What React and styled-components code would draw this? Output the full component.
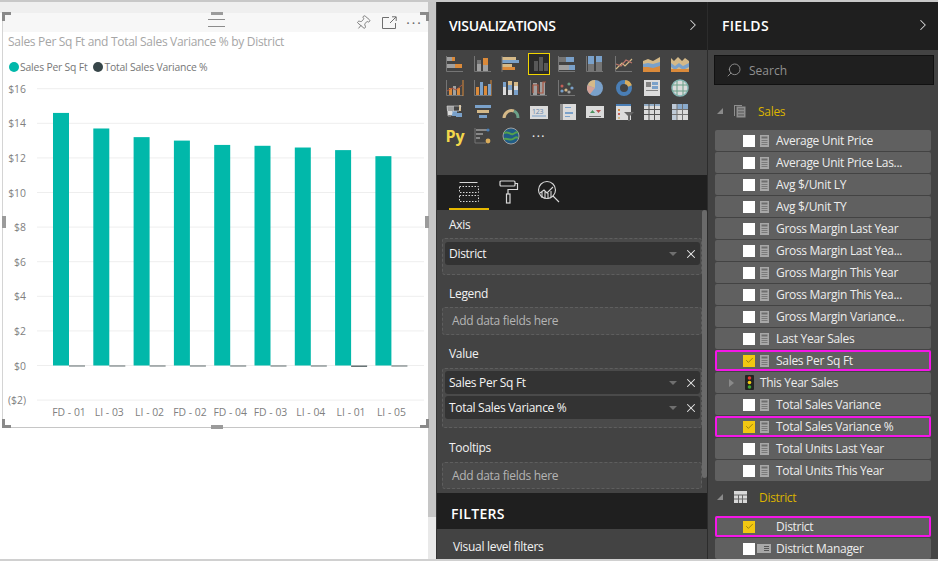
import React from 'react';
import styled, { createGlobalStyle } from 'styled-components';
import { ChevronRight, X, Search, Pin, Check } from 'lucide-react';

const GlobalStyle = createGlobalStyle`
  html, body { margin: 0; padding: 0; background: #fff; }
  body { font-family: "Open Sans", "Liberation Sans", sans-serif; overflow: hidden; }
`;

const Page = styled.div`
  width: 938px;
  height: 561px;
  display: grid;
  grid-template-columns: 428px 9px 271px 230px;
  box-sizing: border-box;
  border-top: 2px solid #c8c8c8;
  border-bottom: 2px solid #d0d0d0;
  overflow: hidden;
`;

/* report canvas */
const Canvas = styled.div`
  background: #fff;
  display: flex;
  flex-direction: column;
  padding-left: 2px;
`;
const CanvasBand = styled.div`
  height: 11px;
  flex: none;
  margin-left: -2px;
  background: #efefef;
`;
const Visual = styled.div`
  position: relative;
  height: 415px;
  border-bottom: 1px solid #c6c6c6;
  border-left: 1px solid #d4d4d4;
  box-sizing: border-box;
`;
const VisualHeader = styled.div`
  height: 19px;
  background: #f7f7f7;
  display: flex;
  align-items: center;
  justify-content: flex-end;
  gap: 9px;
  padding-right: 7px;
  color: #6f6f6f;
`;
const PinIcon = styled(Pin)`
  transform: rotate(40deg);
  margin-right: 2px;
`;
const MoreDots = styled.span`
  font-size: 8px;
  letter-spacing: 2.5px;
  margin-right: -2px;
  color: #6f6f6f;
`;
const Grip = styled.span`
  position: absolute;
  top: 6px;
  left: 205px;
  width: 17px;
  height: 6px;
  border-top: 1px solid #8c8c8c;
  border-bottom: 1px solid #8c8c8c;
`;
const Corner = styled.span`
  position: absolute;
  width: 9px;
  height: 9px;
  ${p => (p.$top ? 'top: -1px;' : 'bottom: -1px;')}
  ${p => (p.$left ? 'left: -1px;' : 'right: -1px;')}
  border-style: solid;
  border-color: #8a8a8a;
  border-width: ${p => (p.$top ? '3px' : '0')} ${p => (p.$left ? '0' : '3px')} ${p =>
  p.$top ? '0' : '3px'} ${p => (p.$left ? '3px' : '0')};
  box-sizing: border-box;
`;
const SideHandle = styled.span`
  position: absolute;
  background: #9b9b9b;
  ${p =>
    p.$side === 'left' && 'left: -1px; top: 203px; width: 4px; height: 12px;'}
  ${p =>
    p.$side === 'right' && 'right: -1px; top: 203px; width: 4px; height: 12px;'}
  ${p =>
    p.$side === 'top' && 'top: -1px; left: 208px; width: 12px; height: 3px;'}
  ${p =>
    p.$side === 'bottom' && 'bottom: -2px; left: 208px; width: 12px; height: 4px;'}
`;
const VisualTitle = styled.div`
  font-size: 12px;
  letter-spacing: -0.3px;
  line-height: 16px;
  color: #a6a6a6;
  margin: 2px 0 0 5px;
  white-space: nowrap;
`;
const Legend = styled.div`
  display: flex;
  align-items: center;
  margin: 10px 0 0 6px;
  font-size: 10.4px;
  letter-spacing: -0.2px;
  line-height: 14px;
  color: #777;
`;
const LegendItem = styled.span`
  display: flex;
  align-items: center;
  margin-right: 6px;
  &::before {
    content: '';
    width: 10px;
    height: 10px;
    border-radius: 50%;
    margin-right: 1px;
    background: ${p => p.$color};
  }
`;
const ChartSvg = styled.svg`
  display: block;
  font-family: "Open Sans", sans-serif;
  font-size: 10.4px;
  fill: #808080;
`;

const Gutter = styled.div`
  background: linear-gradient(#c6c6c6 0 515px, #e9e9e9 515px);
  border-right: 1px solid #333;
`;

/* dark panes */
const Pane = styled.div`
  display: flex;
  flex-direction: column;
  min-height: 0;
  background: #434343;
  color: #fff;
  border-right: ${p => (p.$bordered ? '1px solid #2c2c2c' : '0')};
  box-sizing: border-box;
  position: relative;
  letter-spacing: -0.3px;
`;
const PaneHeader = styled.div`
  height: ${p => p.$h || 48}px;
  flex: none;
  background: #1f1f1f;
  display: flex;
  align-items: center;
  justify-content: space-between;
  padding: ${p => p.$pt || 0}px ${p => p.$pr || 5}px ${p => p.$pb || 0}px ${p => p.$pl || 12}px;
  box-sizing: border-box;
  font-size: 14px;
  font-weight: 600;
  letter-spacing: ${p => p.$ls || 0}px;
  color: #fff;
  svg { color: #d9d9d9; }
`;
const VizGrid = styled.div`
  height: 125px;
  flex: none;
  box-sizing: border-box;
  padding: 2px 0 0 5px;
  display: grid;
  grid-template-columns: repeat(9, 28.1px);
  grid-auto-rows: 24px;
  align-content: start;
`;
const VizCell = styled.div`
  width: 26px;
  height: 24px;
  display: flex;
  align-items: center;
  justify-content: center;
  svg { display: block; opacity: 0.92; }
`;
const ActiveCell = styled(VizCell)`
  box-sizing: border-box;
  width: 22px;
  height: 22px;
  margin: 1px 0 0 2px;
  background: #2a2a2a;
  border: 1.5px solid #f2d600;
`;
const PyMark = styled.span`
  font-size: 16px;
  line-height: 20px;
  font-weight: 700;
  letter-spacing: 0;
  color: #f2d64b;
`;
const MoreMark = styled.span`
  font-size: 7px;
  letter-spacing: 2px;
  color: #e8e8e8;
`;
const TabBar = styled.div`
  height: 35px;
  flex: none;
  background: #1f1f1f;
  display: flex;
  align-items: stretch;
  padding-left: 12px;
`;
const Tab = styled.div`
  width: ${p => p.$w}px;
  display: flex;
  align-items: center;
  justify-content: center;
  box-sizing: border-box;
  margin-right: ${p => p.$mr || 0}px;
  border-bottom: 2px solid ${p => (p.$active ? '#e6b800' : 'transparent')};
`;
const WellScroll = styled.div`
  height: 283px;
  flex: none;
  position: relative;
  padding: 0 5px 0 5px;
  box-sizing: border-box;
  overflow: hidden;
`;
const ScrollThumb = styled.span`
  position: absolute;
  top: 0;
  right: 0;
  width: 5px;
  height: 268px;
  background: #6a6a6a;
  border-radius: 3px;
`;
const WellLabel = styled.div`
  font-size: 12px;
  line-height: 16px;
  color: #f2f2f2;
  margin: ${p => p.$mt}px 0 0 7px;
`;
const Well = styled.div`
  margin-top: ${p => p.$mt}px;
  border: 1px dashed #5e5e5e;
  border-radius: 3px;
  background: #4a4a4a;
  box-sizing: border-box;
  padding: ${p => p.$pad || '0 2px'};
  display: flex;
  flex-direction: column;
  gap: 2px;
`;
const WellHint = styled.div`
  font-size: 12px;
  line-height: ${p => p.$lh}px;
  color: #b4b4b4;
  padding-left: 7px;
`;
const Pill = styled.div`
  height: 23px;
  background: #333;
  border-radius: 3px;
  display: flex;
  align-items: center;
  font-size: 12px;
  color: #f4f4f4;
  padding: 0 2px 0 4px;
`;
const PillName = styled.span`
  flex: 1;
  white-space: nowrap;
`;
const Caret = styled.span`
  width: 0;
  height: 0;
  border-left: 4px solid transparent;
  border-right: 4px solid transparent;
  border-top: 4px solid #6f6f6f;
  margin-right: 7px;
`;
const FilterTitle = styled.div`
  font-size: 12px;
  line-height: 16px;
  color: #f2f2f2;
  margin: 10px 0 0 16px;
`;

/* fields */
const SearchBox = styled.div`
  margin: 5px 4px 0 6px;
  height: 30px;
  flex: none;
  background: #1f1f1f;
  border: 1px solid #111;
  box-sizing: border-box;
  display: flex;
  align-items: center;
  gap: 7px;
  padding-left: 11px;
  font-size: 12px;
  letter-spacing: 0;
  color: #909090;
  svg { color: #9a9a9a; transform: scaleX(-1); }
`;
const Group = styled.div`
  display: flex;
  align-items: center;
  height: ${p => p.$h}px;
  margin: ${p => p.$mt || 0}px 0 ${p => p.$mb || 0}px;
  flex: none;
  font-size: 12px;
  color: #dcb400;
  padding-left: 9px;
`;
const Expander = styled.span`
  width: 0;
  height: 0;
  margin-right: 11px;
  border-left: 6px solid transparent;
  border-bottom: 6px solid #8a8a8a;
`;
const GroupName = styled.span`
  margin-left: ${p => p.$ml}px;
`;
const Rows = styled.div`
  display: flex;
  flex-direction: column;
  gap: 1px;
  margin: 0 7px;
`;
const Row = styled.div`
  height: 21px;
  box-sizing: border-box;
  border-radius: 2px;
  background: #606060;
  display: flex;
  align-items: center;
  font-size: 12px;
  color: #ededed;
  white-space: nowrap;
  padding-left: 28px;
  ${p => p.$picked && 'outline: 2px solid #f516e8; outline-offset: -2px;'}
`;
const CheckBox = styled.span`
  width: 12px;
  height: 12px;
  flex: none;
  background: ${p => (p.$on ? '#f2c811' : '#fff')};
  display: flex;
  align-items: center;
  justify-content: center;
  color: #7d6a10;
  margin-right: 5px;
`;
const RowIcon = styled.span`
  width: 9px;
  flex: none;
  margin-right: 7px;
  display: flex;
  justify-content: center;
`;
const TreeArrow = styled.span`
  width: 0;
  height: 0;
  margin: 0 11px 0 -14px;
  border-top: 4px solid transparent;
  border-bottom: 4px solid transparent;
  border-left: 5px solid #8a8a8a;
`;
const TrafficLight = styled.svg`
  margin-right: 6px;
`;
const ManagerIcon = styled.svg`
  margin: 0 5px 0 -3px;
`;

const CHART = {
  bars: [14.6, 13.7, 13.2, 13.0, 12.75, 12.7, 12.6, 12.45, 12.1],
  neg: [0.08, 0.08, 0.08, 0.08, 0.08, 0.08, 0.1, 0.18, 0.08],
  names: ['FD - 01', 'LI - 03', 'LI - 02', 'FD - 02', 'FD - 04', 'FD - 03', 'LI - 04', 'LI - 01', 'LI - 05'],
  ticks: [16, 14, 12, 10, 8, 6, 4, 2, 0, -2],
};
const y0 = 291.5;
const yOf = v => y0 - v * 17.3;

const Chart = () => (
  <ChartSvg width="424" height="350">
    {CHART.ticks.map(t => (
      <g key={t}>
        <line x1="34" x2="421" y1={yOf(t)} y2={yOf(t)} stroke="#eeeeee" />
        <text x="23" y={yOf(t) + 4} textAnchor="end">
          {t < 0 ? `($${-t})` : `$${t}`}
        </text>
      </g>
    ))}
    {CHART.bars.map((v, i) => {
      const x = 50 + i * 40.3;
      return (
        <g key={i}>
          <rect x={x} y={yOf(v)} width="16" height={v * 17.3} fill="#01b8aa" />
          <rect x={x + 16} y={y0} width="16" height={Math.max(1, CHART.neg[i] * 8)} fill="#374649" opacity="0.8" />
          <text x={x + 16} y={y0 + 50} textAnchor="middle">
            {CHART.names[i]}
          </text>
        </g>
      );
    })}
  </ChartSvg>
);

// palette of the gallery icons
const O = '#e8913a', G = '#a8a8a8', B = '#7fa9d6', T = '#e2c48e', L = '#7a7a7a', W = '#e8e8e8';

const rects = list => list.map(([x, y, w, h, f], i) => <rect key={i} x={x} y={y} width={w} height={h} fill={f} />);
const Axes = () => <path d="M1.5 1v15.5H18" fill="none" stroke={L} />;

const VIZ = [
  <><Axes />{rects([[2, 2, 8, 4, O], [2, 2, 5, 4, G], [2, 9, 15, 4, O], [2, 9, 8, 4, G]])}</>,
  <><Axes />{rects([[4, 9, 4, 7, G], [4, 5, 4, 4, L], [10, 3, 5, 13, O], [10, 10, 5, 6, G]])}</>,
  <>{rects([[1, 2, 14, 3, T], [1, 5, 17, 3, B], [1, 9, 10, 3, T], [1, 12, 13, 3, O]])}<path d="M1 1v16" stroke={L} /></>,
  <>{rects([[5, 6, 4, 10, '#5c5c5c'], [10, 2, 4, 14, '#5c5c5c'], [15, 8, 4, 8, '#5c5c5c']])}</>,
  <><Axes />{rects([[2, 2, 7, 5, L], [9, 2, 8, 5, B], [2, 10, 10, 5, G], [12, 10, 6, 5, B]])}</>,
  <><Axes />{rects([[3, 1, 6, 8, B], [3, 9, 6, 7, L], [11, 1, 6, 6, B], [11, 7, 6, 9, L]])}</>,
  <><Axes /><path d="M2 14l6-6 3 3 7-7" fill="none" stroke={T} strokeWidth="1.2" /><path d="M2 9l5 2 5-6 6 3" fill="none" stroke="#c77b6e" strokeWidth="1.2" /></>,
  <><path d="M1 6l5-2 5 2 7-4v15H1z" fill={T} /><path d="M1 9l5-1 5 1 7-2v10H1z" fill={B} /><path d="M1 12l5 0 5 1 7-2v6H1z" fill={O} /></>,
  <><path d="M1 3l3 3 4-4 4 4 3-3 4 3v11H1z" fill={T} /><path d="M1 8l4 3 4-3 4 3 6-3v4l-6 3-4-3-4 3-4-3z" fill={B} /><path d="M1 14h18v3H1z" fill={O} /></>,
  <><Axes /><path d="M18 1v16" stroke={O} />{rects([[4, 9, 3, 7, O], [8, 7, 3, 9, G], [12, 9, 3, 7, O]])}<path d="M2 12l5-3 4 2 6-5" fill="none" stroke="#b5563f" /></>,
  <><Axes /><path d="M18 1v16" stroke={O} />{rects([[3, 8, 3, 8, O], [7, 3, 3, 13, B], [11, 7, 3, 9, O], [15, 5, 3, 11, B]])}</>,
  <>{rects([[2, 3, 3, 5, B], [2, 8, 3, 8, W], [7, 2, 4, 4, T], [7, 6, 4, 5, B], [7, 11, 4, 5, W], [13, 3, 4, 4, T], [13, 7, 4, 4, W], [13, 11, 4, 5, B]])}</>,
  <><Axes />{rects([[4, 4, 4, 12, G], [11, 3, 5, 13, G]])}<path d="M4 14V6h5v8h5V3h3" fill="none" stroke="#b5563f" strokeWidth="1.2" /></>,
  <><Axes /><circle cx="5" cy="7" r="1.5" fill="#d0635a" /><circle cx="9" cy="11" r="1.6" fill={T} /><circle cx="12" cy="5" r="1.6" fill="#6fa98f" /><circle cx="15" cy="9" r="1.6" fill={B} /><circle cx="5" cy="12" r="1.6" fill={B} /><circle cx="12" cy="13" r="1.6" fill={G} /></>,
  <><circle cx="10" cy="9" r="8" fill={B} /><path d="M10 9V1a8 8 0 0 0-7.5 5.2z" fill={T} /><path d="M10 9L2.5 6.2A8 8 0 0 0 5 15.2z" fill="#e0a99e" /></>,
  <><circle cx="10" cy="9" r="6" fill="none" stroke="#4b84bf" strokeWidth="4" /><path d="M11 3a6 6 0 0 1 5 4" fill="none" stroke="#e8b75e" strokeWidth="4" /></>,
  <>{rects([[2, 1, 16, 16, W], [4, 3, 5, 5, '#888'], [10, 3, 6, 3, B], [10, 7, 6, 3, B], [4, 11, 12, 1, '#888']])}</>,
  <><circle cx="10" cy="9" r="8" fill={W} /><circle cx="10" cy="9" r="8" fill="none" stroke="#8fc4c4" strokeWidth="1.5" /><path d="M2 6h16M2 12h16M7 1.5v15M13 1.5v15" stroke="#6fa98f" /></>,
  <>{rects([[2, 3, 7, 5, G], [7, 8, 5, 5, B], [11, 10, 6, 4, B], [3, 8, 4, 4, W], [14, 2, 2, 6, T]])}<path d="M2 3h14l-2 5H8l-2 5H3z" fill="none" stroke={W} strokeWidth=".6" /></>,
  <>{rects([[2, 2, 16, 3, B], [4, 7, 12, 3, T], [6, 12, 8, 3, B]])}</>,
  <><path d="M3 15a7.500 7.500 0 0 1 10-7" fill="none" stroke={T} strokeWidth="3" /><path d="M13 8a7.500 7.500 0 0 1 4 7" fill="none" stroke="#6fa98f" strokeWidth="3" /></>,
  <><rect x="1" y="3" width="18" height="13" fill={W} /><path d="M3 13h14" stroke={B} /><text x="3" y="10.500" fontSize="7" fill="#6a8db5" fontFamily="Open Sans, sans-serif">123</text></>,
  <>{rects([[3, 1, 16, 16, W], [3, 1, 3, 16, '#9a9a9a'], [8, 4, 6, 1, B], [8, 9, 8, 2, B], [8, 13, 5, 1, B]])}</>,
  <>{rects([[1, 3, 18, 12, W], [4, 13, 12, 1, '#777']])}<path d="M5 10l2.500-3 2.500 3z" fill="#4d9a62" /><path d="M11 7h5l-2.500 3z" fill="#c0504d" /></>,
  <>{rects([[2, 1, 15, 16, W], [2, 1, 15, 2, '#4b84bf'], [4, 6, 2, 2, O], [4, 10, 2, 2, '#d0635a'], [4, 14, 2, 2, T]])}<path d="M10 9h10l-4 4v5l-2 1v-6z" fill="#6a6a6a" /></>,
  <><rect x="2" y="1" width="16" height="16" fill={W} /><path d="M2 2h16" stroke="#4b84bf" /><path d="M2 6.500h16M2 11.500h16M7 1v16M12.500 1v16" stroke="#555" /></>,
  <><rect x="2" y="1" width="16" height="16" fill={W} /><rect x="2" y="1" width="16" height="5" fill="#8fb3d8" /><rect x="2" y="1" width="5" height="16" fill="#c9d6e4" /><path d="M2 6.500h16M2 11.500h16M7 1v16M12.500 1v16" stroke="#777" /></>,
  'py',
  <><path d="M2 1v15h11" fill="none" stroke={L} /><path d="M3 3h12M3 7h7M3 11h4" stroke={G} strokeWidth="1.3" /><circle cx="15" cy="3" r="1.6" fill="#4b84bf" /><circle cx="15" cy="14" r="2.4" fill="#e8b75e" /></>,
  <><circle cx="10" cy="9" r="8" fill="#1e5f8c" stroke={G} /><path d="M3 6c5-2 6 2 9 1s3-3 5-1M3 12c4-1 6 2 9 0s3-2 5-1" fill="none" stroke="#56a84f" strokeWidth="2" /></>,
  'more',
];

const VizIcon = ({ item }) => {
  if (item === 'py') return <PyMark>Py</PyMark>;
  if (item === 'more') return <MoreMark>•••</MoreMark>;
  return (
    <svg width="20" height="18" viewBox="0 0 20 18">
      {item}
    </svg>
  );
};

const CalcIcon = () => (
  <svg width="9" height="12" viewBox="0 0 9 12">
    <rect width="9" height="12" fill="#a8a8a8" />
    <rect x="1.5" y="1.5" width="6" height="2" fill="#6e6e6e" />
    <path d="M1.500 5.500h6M1.500 7.500h6M1.500 9.500h6" stroke="#7a7a7a" />
  </svg>
);

const Field = ({ name, on, picked }) => (
  <Row $picked={picked}>
    <CheckBox $on={on}>{on && <Check size={9} strokeWidth={2} />}</CheckBox>
    <RowIcon>{name !== 'District' && <CalcIcon />}</RowIcon>
    {name}
  </Row>
);

const SALES = [
  'Average Unit Price',
  'Average Unit Price Las...',
  'Avg $/Unit LY',
  'Avg $/Unit TY',
  'Gross Margin Last Year',
  'Gross Margin Last Yea...',
  'Gross Margin This Year',
  'Gross Margin This Yea...',
  'Gross Margin Variance...',
  'Last Year Sales',
];

const PillRow = ({ name }) => (
  <Pill>
    <PillName>{name}</PillName>
    <Caret />
    <X size={14} color="#e8e8e8" strokeWidth={1.8} />
  </Pill>
);

export default function App() {
  return (
    <Page>
      <GlobalStyle />
      <Canvas>
        <CanvasBand />
        <Visual>
          <VisualHeader>
            <PinIcon size={16} strokeWidth={1.2} />
            <svg width="15" height="13" viewBox="0 0 15 13" fill="none" stroke="currentColor">
              <path d="M7 1.500H.5v11h13V7M8 7l6-6M10 .8h4.200V5" />
            </svg>
            <MoreDots>•••</MoreDots>
          </VisualHeader>
          <Grip />
          <VisualTitle>Sales Per Sq Ft and Total Sales Variance % by District</VisualTitle>
          <Legend>
            <LegendItem $color="#01b8aa">Sales Per Sq Ft</LegendItem>
            <LegendItem $color="#374649">Total Sales Variance %</LegendItem>
          </Legend>
          <Chart />
          <Corner $top $left />
          <Corner $top />
          <Corner $left />
          <Corner />
          <SideHandle $side="left" />
          <SideHandle $side="right" />
          <SideHandle $side="top" />
          <SideHandle $side="bottom" />
        </Visual>
      </Canvas>
      <Gutter />
      <Pane $bordered>
        <PaneHeader $ls={-0.35} $pb={2} $pr={5}>
          VISUALIZATIONS
          <ChevronRight size={18} strokeWidth={1.4} />
        </PaneHeader>
        <VizGrid>
          {VIZ.map((item, i) =>
            i === 3 ? (
              <ActiveCell key={i}>
                <VizIcon item={item} />
              </ActiveCell>
            ) : (
              <VizCell key={i}>
                <VizIcon item={item} />
              </VizCell>
            )
          )}
        </VizGrid>
        <TabBar>
          <Tab $w={40} $active $mr={5}>
            <svg width="22" height="22" viewBox="0 0 22 22" fill="none" stroke="#d8d8d8">
              <path d="M1.500 1.500h18" />
              <path d="M1.500 5.500h19v6h-19zM1.500 14.500h19v6h-19z" strokeDasharray="1.5 1.5" />
            </svg>
          </Tab>
          <Tab $w={30} $mr={10}>
            <svg width="20" height="24" viewBox="0 0 20 24" fill="none" stroke="#d8d8d8" strokeWidth="1.2">
              <rect x="1" y="1" width="15" height="5" rx="1" />
              <path d="M16 3.500h2.500v6H9V14" />
              <rect x="7.500" y="14" width="3.5" height="9" />
            </svg>
          </Tab>
          <Tab $w={30}>
            <svg width="24" height="24" viewBox="0 0 24 24" fill="none" stroke="#d8d8d8" strokeWidth="1.1">
              <circle cx="10" cy="10" r="8.5" />
              <path d="M16 16l6 6M3 13l4-3 3 3 6-6M5 12v6M8 11v8M11 13v6M14 11v6" />
            </svg>
          </Tab>
        </TabBar>
        <WellScroll>
          <ScrollThumb />
          <WellLabel $mt={7}>Axis</WellLabel>
          <Well $mt={5} $pad="3px 1px 9px 2px">
            <PillRow name="District" />
          </Well>
          <WellLabel $mt={11}>Legend</WellLabel>
          <Well $mt={5}>
            <WellHint $lh={26}>Add data fields here</WellHint>
          </Well>
          <WellLabel $mt={11}>Value</WellLabel>
          <Well $mt={6} $pad="2px 1px 8px 2px">
            <PillRow name="Sales Per Sq Ft" />
            <PillRow name="Total Sales Variance %" />
          </Well>
          <WellLabel $mt={12}>Tooltips</WellLabel>
          <Well $mt={6}>
            <WellHint $lh={25}>Add data fields here</WellHint>
          </Well>
        </WellScroll>
        <PaneHeader $h={36} $pl={14} $pt={4} $ls={0.3}>
          FILTERS
        </PaneHeader>
        <FilterTitle>Visual level filters</FilterTitle>
      </Pane>
      <Pane>
        <PaneHeader $pl={14} $pb={2} $pr={6} $ls={0.3}>
          FIELDS
          <ChevronRight size={18} strokeWidth={1.4} />
        </PaneHeader>
        <SearchBox>
          <Search size={16} strokeWidth={1.3} />
          Search
        </SearchBox>
        <Group $h={34} $mt={9} $mb={2}>
          <Expander />
          <svg width="12" height="14" viewBox="0 0 12 14" fill="#8e8e8e">
            <path d="M0 1h8v1H1v10H0z" />
            <rect x="2.500" y="2.500" width="9" height="11" />
            <path d="M4 5h6M4 8h6M4 11h6" stroke="#555" />
          </svg>
          <GroupName $ml={12}>Sales</GroupName>
        </Group>
        <Rows>
          {SALES.map(n => (
            <Field key={n} name={n} />
          ))}
          <Field name="Sales Per Sq Ft" on picked />
          <Row>
            <TreeArrow />
            <TrafficLight width="9" height="15" viewBox="0 0 9 15">
              <rect width="9" height="15" rx="1" fill="#222" />
              <circle cx="4.5" cy="3" r="1.8" fill="#e03c31" />
              <circle cx="4.5" cy="7.5" r="1.8" fill="#f2c811" />
              <circle cx="4.5" cy="12" r="1.8" fill="#3fa535" />
            </TrafficLight>
            This Year Sales
          </Row>
          <Field name="Total Sales Variance" />
          <Field name="Total Sales Variance %" on picked />
          <Field name="Total Units Last Year" />
          <Field name="Total Units This Year" />
        </Rows>
        <Group $h={30} $mt={1} $mb={4}>
          <Expander />
          <svg width="13" height="12" viewBox="0 0 13 12">
            <rect width="13" height="12" fill="#d8d8d8" />
            <path d="M0 4h13M0 8h13M4.500 4v8M8.500 4v8" stroke="#666" />
          </svg>
          <GroupName $ml={12}>District</GroupName>
        </Group>
        <Rows>
          <Field name="District" on picked />
          <Row>
            <CheckBox />
            <ManagerIcon width="14" height="9" viewBox="0 0 14 9">
              <rect width="14" height="9" fill="#a8a8a8" />
              <path d="M7 2.500h5M7 4.500h5M7 6.500h5" stroke="#555" />
            </ManagerIcon>
            District Manager
          </Row>
        </Rows>
      </Pane>
    </Page>
  );
}
